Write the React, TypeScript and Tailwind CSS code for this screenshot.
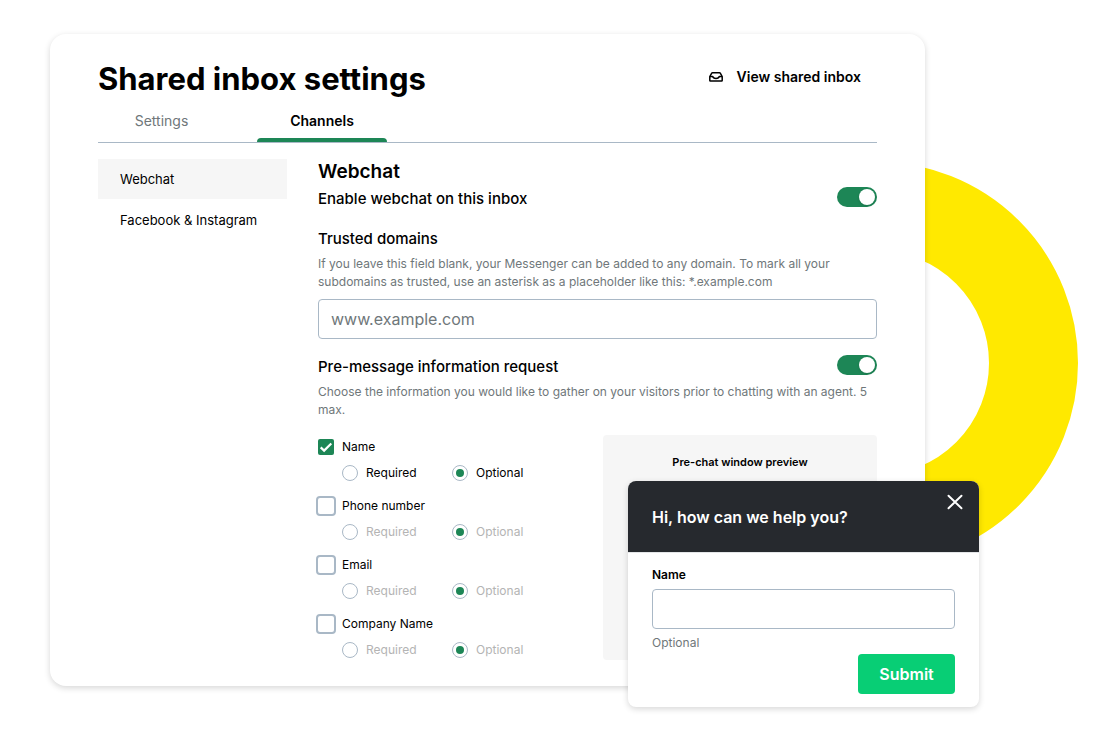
import { useState } from "react";
import clsx from "clsx";

const FIELDS = ["Name", "Phone number", "Email", "Company Name"];

function InboxIcon() {
  return (
    <svg width="14" height="10" viewBox="0 0 14 10" fill="none" stroke="currentColor" strokeWidth="1.5" strokeLinejoin="round" aria-hidden="true">
      <path d="M3.500.8h7q.6 0 .9.500L13.200 4.500v4q0 .6-.6.6H1.400q-.6 0-.6-.6v-4L2.600 1.300q.3-.5.9-.5z" />
      <path d="M1 4.500h2.700c.3 1.300 1.300 1.900 3.300 1.900s3-.6 3.300-1.900H13" />
    </svg>
  );
}

function CloseIcon() {
  return (
    <svg width="16" height="16" viewBox="0 0 16 16" fill="none" stroke="currentColor" strokeWidth="2" strokeLinecap="round" aria-hidden="true">
      <path d="M1.500 1.800 14.500 14.200M14.500 1.800 1.500 14.200" />
    </svg>
  );
}

function Toggle({ label }: { label: string }) {
  return (
    <input
      type="checkbox"
      role="switch"
      aria-label={label}
      defaultChecked
      className="relative h-5 w-10 shrink-0 appearance-none rounded-full bg-[#a9b8c6] checked:bg-[#1d8656] before:absolute before:top-0.5 before:left-0.5 before:size-4 before:rounded-full before:bg-white before:shadow before:content-[''] checked:before:left-[22px]"
    />
  );
}

function Field({ name, initial }: { name: string; initial: boolean }) {
  const [enabled, setEnabled] = useState(initial);

  return (
    <fieldset className="flex flex-col gap-0.5">
      <label className="flex h-6 items-center gap-2">
        <span className="relative flex size-4 shrink-0">
          <input
            type="checkbox"
            checked={enabled}
            onChange={(e) => setEnabled(e.target.checked)}
            className="size-4 appearance-none rounded-xs bg-white outline-2 outline-[#a9b8c6] checked:bg-[#1d8656] checked:outline-0"
          />
          {enabled && (
            <svg className="pointer-events-none absolute inset-0" width="16" height="16" viewBox="0 0 16 16" fill="none" stroke="white" strokeWidth="2.2" aria-hidden="true">
              <path d="m2.700 8.400 3.400 3.200L13.300 4.500" />
            </svg>
          )}
        </span>
        {name}
      </label>
      <div className={clsx("flex h-6 items-center pl-6", !enabled && "text-[#b4b4b4]")}>
        {["Required", "Optional"].map((option) => (
          <label key={option} className="flex w-[110px] items-center gap-2">
            <input
              type="radio"
              name={name}
              disabled={!enabled}
              defaultChecked={option === "Optional"}
              className="grid size-4 shrink-0 appearance-none place-items-center rounded-full border border-[#a9b8c6] bg-white before:size-2 before:rounded-full before:content-[''] checked:before:bg-[#1d8656]"
            />
            {option}
          </label>
        ))}
      </div>
    </fieldset>
  );
}

function ChatPreview() {
  return (
    <section className="absolute -right-[54px] -bottom-[21px] w-[351px] overflow-hidden rounded-lg bg-white shadow-[0_2px_6px_rgba(0,0,0,0.16)]">
      <header className="relative flex h-[71px] items-center bg-[#26292e] px-6 text-white">
        <h2 className="text-base font-semibold">Hi, how can we help you?</h2>
        <button type="button" aria-label="Close" className="absolute top-[13px] right-4">
          <CloseIcon />
        </button>
      </header>
      <form className="flex flex-col border-t border-[#e4e6e8] px-6 pt-[13px] pb-[13px]" onSubmit={(e) => e.preventDefault()}>
        <label htmlFor="visitor" className="text-[12px] leading-[18px] font-semibold">
          Name
        </label>
        <input id="visitor" className="mt-[5px] h-10 rounded border border-[#a9b8c6] px-3 text-base" />
        <p className="mt-[5px] text-[12px] leading-[18px] text-[#6f777a]">Optional</p>
        <button type="submit" className="mt-0.5 h-10 w-[97px] self-end rounded bg-[#08ce75] text-base font-semibold text-white">
          Submit
        </button>
      </form>
    </section>
  );
}

export default function App() {
  return (
    <main className="relative min-h-screen overflow-hidden bg-white pt-[34px] pr-[185px] pb-[54px] pl-[50px] font-['Inter',sans-serif] text-black">
      <svg className="absolute top-[162px] right-8" width="402" height="402" viewBox="0 0 402 402" aria-hidden="true">
        <circle cx="201" cy="201" r="156.500" fill="none" stroke="#ffe900" strokeWidth="89" />
      </svg>

      <div className="relative rounded-2xl bg-white px-12 pt-[25px] pb-6 shadow-[0_2px_6px_rgba(0,0,0,0.16)]">
        <header className="flex items-center justify-between">
          <h1 className="text-[31px] leading-10 font-bold">Shared inbox settings</h1>
          <a href="#inbox" className="flex items-center gap-3.5 pr-4 pb-1 text-[14px] leading-5 font-semibold">
            <InboxIcon />
            View shared inbox
          </a>
        </header>

        <nav className="flex h-11 gap-8 border-b border-[#a9b8c6] text-[14px] leading-5">
          <a href="#settings" className="flex w-[127px] items-center justify-center text-[#6f777a]">
            Settings
          </a>
          <a
            href="#channels"
            className="relative flex w-[130px] items-center justify-center font-semibold after:absolute after:inset-x-0 after:bottom-0 after:h-1 after:rounded-t after:bg-[#1d8656] after:content-['']"
          >
            Channels
          </a>
        </nav>

        <div className="mt-4 flex gap-[31px]">
          <nav className="flex w-[189px] shrink-0 flex-col gap-px text-[13px] leading-5">
            <a href="#webchat" className="flex h-10 items-center bg-[#f6f6f6] px-[22px]">
              Webchat
            </a>
            <a href="#social" className="flex h-10 items-center px-[22px]">
              Facebook &amp; Instagram
            </a>
          </nav>

          <section className="min-w-0 flex-1">
            <h2 className="text-[19px] leading-[26px] font-semibold">Webchat</h2>
            <div className="mt-0.5 flex justify-between">
              <h3 className="text-[15px] leading-6 font-medium">Enable webchat on this inbox</h3>
              <Toggle label="Enable webchat on this inbox" />
            </div>

            <label htmlFor="domains" className="mt-4 block text-[15px] leading-6 font-medium">
              Trusted domains
            </label>
            <p className="mt-1 text-[12px] leading-[18px] text-[#6f777a]">
              If you leave this field blank, your Messenger can be added to any domain. To mark all your subdomains as trusted, use an asterisk as a placeholder like this: *.example.com
            </p>
            <input
              id="domains"
              placeholder="www.example.com"
              className="mt-2 block h-10 w-full rounded border border-[#a9b8c6] px-3 text-base placeholder:text-[#6f777a]"
            />

            <div className="mt-4 flex justify-between">
              <h3 className="text-[15px] leading-6 font-medium">Pre-message information request</h3>
              <Toggle label="Pre-message information request" />
            </div>
            <p className="mt-1 text-[12px] leading-[18px] text-[#6f777a]">
              Choose the information you would like to gather on your visitors prior to chatting with an agent. 5 max.
            </p>

            <div className="mt-4 flex items-start justify-between">
              <div className="flex flex-col gap-[9px] text-[12px]">
                {FIELDS.map((name, i) => (
                  <Field key={name} name={name} initial={i === 0} />
                ))}
              </div>
              <div className="h-[225px] w-[274px] rounded bg-[#f6f6f6] pt-[18px] text-center text-[11px] leading-[18px] font-semibold">
                Pre-chat window preview
              </div>
            </div>
          </section>
        </div>

        <ChatPreview />
      </div>
    </main>
  );
}
